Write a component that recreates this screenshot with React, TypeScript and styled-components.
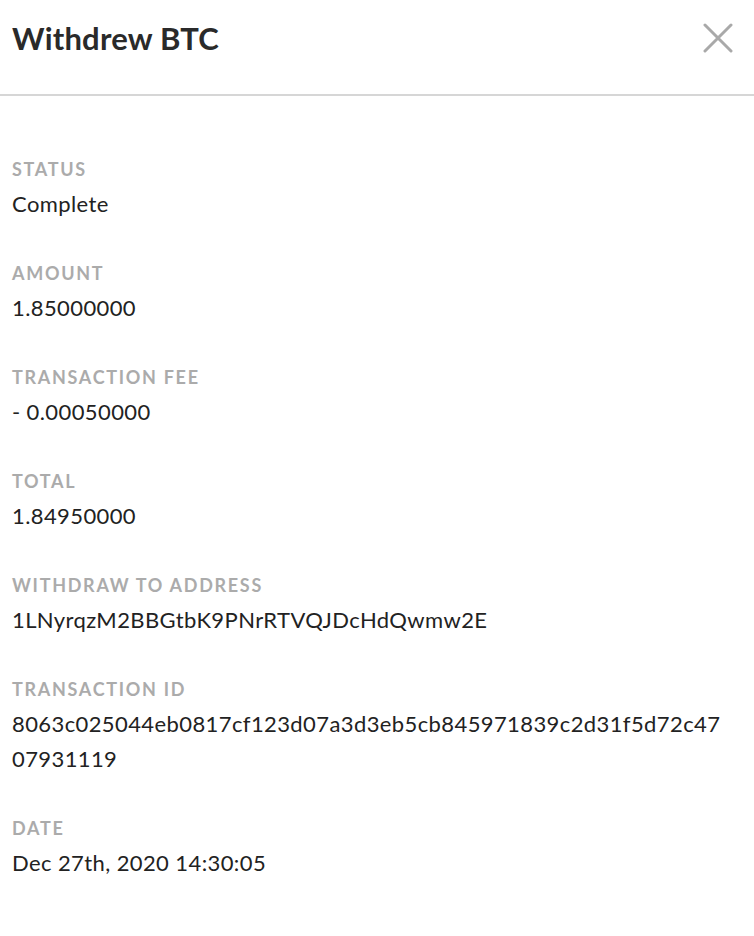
import styled, { createGlobalStyle } from "styled-components";

const GlobalStyle = createGlobalStyle`
    body {
        margin: 0;
        background: #ffffff;
        font-family: Lato, "Open Sans", sans-serif;
    }
`;

const Panel = styled.div`
    width: 754px;
    min-height: 936px;
    background: #ffffff;
`;

const Header = styled.header`
    display: flex;
    align-items: center;
    justify-content: space-between;
    height: 96px;
    padding: 0 21px 18px 12px;
    border-bottom: 2px solid #d6d6d6;
    box-sizing: border-box;
`;

const Title = styled.h1`
    margin: 0;
    font-size: 31px;
    font-weight: 700;
    letter-spacing: 0.2px;
    color: #2a2a2a;
`;

const CloseButton = styled.button`
    display: flex;
    padding: 0;
    border: none;
    background: none;
    cursor: pointer;
`;

const Body = styled.div`
    display: flex;
    flex-direction: column;
    gap: 39px;
    padding: 60px 28px 0 12px;
`;

const Field = styled.div`
    display: flex;
    flex-direction: column;
`;

const Label = styled.div`
    font-size: 18px;
    line-height: 26px;
    font-weight: 700;
    letter-spacing: 1.7px;
    color: #ababab;
    text-transform: uppercase;
`;

const Value = styled.div`
    margin-top: 4px;
    font-size: 22px;
    line-height: 35px;
    letter-spacing: 0.4px;
    color: #222222;
    word-break: break-all;
`;

const fields = [
    { label: "Status", value: "Complete" },
    { label: "Amount", value: "1.85000000" },
    { label: "Transaction Fee", value: "- 0.00050000" },
    { label: "Total", value: "1.84950000" },
    { label: "Withdraw to Address", value: "1LNyrqzM2BBGtbK9PNrRTVQJDcHdQwmw2E" },
    {
        label: "Transaction ID",
        value: "8063c025044eb0817cf123d07a3d3eb5cb845971839c2d31f5d72c4707931119",
    },
    { label: "Date", value: "Dec 27th, 2020 14:30:05" },
];

const App = () => {
    return (
        <Panel>
            <GlobalStyle />
            <Header>
                <Title>Withdrew BTC</Title>
                <CloseButton aria-label="Close">
                    <svg width="30" height="30" viewBox="0 0 30 30">
                        <path
                            d="M2 2 L28 28 M28 2 L2 28"
                            stroke="#a9a9a9"
                            strokeWidth="3"
                            strokeLinecap="round"
                        />
                    </svg>
                </CloseButton>
            </Header>
            <Body>
                {fields.map((f) => (
                    <Field key={f.label}>
                        <Label>{f.label}</Label>
                        <Value>{f.value}</Value>
                    </Field>
                ))}
            </Body>
        </Panel>
    );
};

export default App;
